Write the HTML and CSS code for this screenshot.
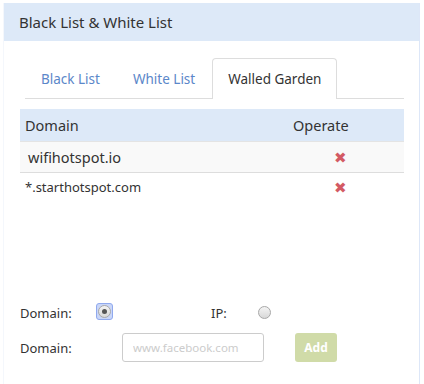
FILE: index.html
```html
<!DOCTYPE html>
<html lang="en">
<head>
  <meta charset="UTF-8">
  <title>Black List & White List</title>
  <link rel="stylesheet" href="styles.css">
</head>
<body>
  <div class="panel">
    <div class="panel-head">Black List &amp; White List</div>
    <div class="panel-body">
      <ul class="tabs">
        <li><a href="#">Black List</a></li>
        <li><a href="#">White List</a></li>
        <li class="active"><a href="#">Walled Garden</a></li>
      </ul>

      <table class="list">
        <thead>
          <tr><th class="col-domain">Domain</th><th class="col-op">Operate</th></tr>
        </thead>
        <tbody>
          <tr class="big"><td class="col-domain">wifihotspot.io</td><td class="col-op"><span class="del">&#10006;</span></td></tr>
          <tr><td class="col-domain">*.starthotspot.com</td><td class="col-op"><span class="del">&#10006;</span></td></tr>
        </tbody>
      </table>

      <div class="form">
        <div class="row">
          <label class="lbl">Domain:</label>
          <span class="focus"><span class="radio"><i></i></span></span>
          <label class="lbl ip">IP:</label>
          <span class="radio"></span>
        </div>
        <div class="row">
          <label class="lbl">Domain:</label>
          <input class="input" type="text" placeholder="www.facebook.com">
          <button class="btn">Add</button>
        </div>
      </div>
    </div>
  </div>
</body>
</html>
```

FILE: styles.css
```css
body {
  margin: 0;
  padding: 3px 0 0 3px;
  font-family: "Noto Sans", "DejaVu Sans", sans-serif;
  color: #333;
  background: #fff;
}
.panel {
  width: 415px;
  height: 400px;
  border-right: 1px solid #dde7f8;
  border-left: 1px solid #f4f7fc;
}
.panel-head {
  height: 38px;
  line-height: 38px;
  padding-left: 15px;
  background: #dde9f8;
  font-size: 15px;
  color: #333;
}
.panel-body {
  padding: 17px 15px 0 16px;
}
.tabs {
  list-style: none;
  margin: 0 0 10px 5px;
  padding: 0;
  display: flex;
  border-bottom: 1px solid #ddd;
  height: 40px;
}
.tabs li {
  margin-right: 1px;
}
.tabs a {
  display: block;
  height: 40px;
  line-height: 40px;
  padding: 0 15px;
  font-size: 13.5px;
  color: #5b87c9;
  text-decoration: none;
  border: 1px solid transparent;
  border-bottom: none;
  border-radius: 4px 4px 0 0;
  box-sizing: border-box;
}
.tabs li.active a {
  color: #333;
  background: #fff;
  border-color: #ddd;
  height: 41px;
}
.list {
  width: 384px;
  border-collapse: collapse;
}
.list th {
  height: 32px;
  background: #dde9f8;
  font-weight: normal;
  font-size: 14.5px;
  text-align: left;
  padding: 0 0 0 5px;
  border-bottom: 1px solid #e4e4e4;
}
.list td {
  font-size: 13px;
  height: 27px;
  padding: 0 0 0 5px;
}
.list tr.big td {
  font-size: 14.5px;
  height: 30px;
  padding-left: 8px;
  background: #f9f9f9;
  border-bottom: 1px solid #ddd;
}
.list .col-op {
  width: 111px;
  text-align: left;
  padding-left: 0;
}
.list th.col-op {
  padding-left: 0;
}
.list td.col-op,
.list tr.big td.col-op {
  padding-left: 41px;
  width: 70px;
}
.del {
  color: #d35a64;
  font-size: 15px;
}
.form {
  margin-top: 98px;
  display: flex;
  flex-direction: column;
  gap: 6px;
}
.row {
  display: flex;
  align-items: center;
  height: 29px;
  font-size: 13px;
}
.lbl {
  width: 79px;
  color: #333;
}
.lbl.ip {
  width: 47px;
  margin-left: 98px;
}
.focus {
  display: flex;
  padding: 1px;
  border: 1px solid #90a9ee;
  border-radius: 3px;
  background: #c9d6f8;
  margin: -3px 0 0 -3px;
}
.radio {
  width: 11px;
  height: 11px;
  border-radius: 50%;
  border: 1px solid #a8a8a8;
  background: linear-gradient(#f4f4f4, #d8d8d8);
  display: flex;
  align-items: center;
  justify-content: center;
}
.radio i {
  width: 5px;
  height: 5px;
  border-radius: 50%;
  background: #555;
}
.input {
  margin-left: 23px;
  width: 142px;
  height: 29px;
  box-sizing: border-box;
  border: 1px solid #ccc;
  border-radius: 3px;
  padding: 0 10px;
  font-family: inherit;
  font-size: 11.5px;
  color: #555;
}
.input::placeholder {
  color: #ccc;
}
.btn {
  margin-left: 31px;
  width: 42px;
  height: 29px;
  border: none;
  border-radius: 3px;
  background: #d0dba8;
  color: #fff;
  font-family: inherit;
  font-weight: bold;
  font-size: 12px;
  padding: 0;
}
```
